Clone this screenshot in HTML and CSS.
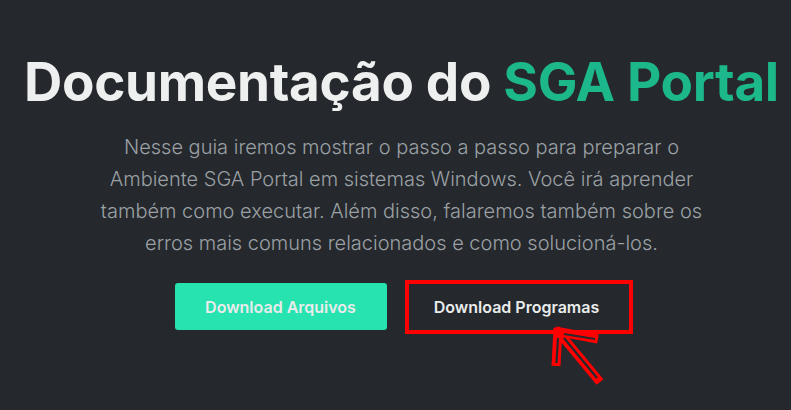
FILE: index.html
```html
<!DOCTYPE html>
<html lang="pt-BR">
<head>
<meta charset="utf-8">
<link rel="stylesheet" href="styles.css">
</head>
<body>
<main class="hero">
  <h1 class="title">Documentação do <span class="accent">SGA Portal</span></h1>
  <p class="lead">Nesse guia iremos mostrar o passo a passo para preparar o Ambiente SGA Portal em sistemas Windows. Você irá aprender também como executar. Além disso, falaremos também sobre os erros mais comuns relacionados e como solucioná-los.</p>
  <div class="actions">
    <a class="btn btn-primary" href="#">Download Arquivos</a>
    <div class="annotated">
      <a class="btn btn-ghost" href="#">Download Programas</a>
      <span class="mark-box"></span>
      <svg class="arrow" width="60" height="64" viewBox="0 0 60 64">
        <g fill="none" stroke-linecap="butt" stroke-linejoin="miter">
          <path d="M8 4 L6 42 M5 7 L48 15 M6 5 L50 58" stroke="#ff0000" stroke-width="9"/>
          <path d="M8 14 L6.5 39 M14 10 L45 15 M14 14 L47 54" stroke="#25282c" stroke-width="2.2"/>
        </g>
      </svg>
    </div>
  </div>
</main>
</body>
</html>
```
FILE: styles.css
```css
html, body {
  margin: 0;
  padding: 0;
  background: #25282c;
  height: 100%;
}
body {
  font-family: Inter, "Noto Sans", sans-serif;
  overflow: hidden;
}
.hero {
  display: flex;
  flex-direction: column;
  align-items: center;
  padding-top: 49px;
}
.title {
  margin: 0 0 0 12px;
  font-size: 53px;
  font-weight: 700;
  line-height: 67px;
  color: #eef0f0;
  letter-spacing: -0.32px;
  white-space: nowrap;
}
.accent {
  color: #1cb88c;
}
.lead {
  margin: 15px 0 0 12px;
  width: 620px;
  text-align: center;
  font-size: 20px;
  line-height: 32px;
  color: #9aa0a5;
  font-weight: 300;
}
.actions {
  display: flex;
  align-items: center;
  gap: 18px;
  margin-top: 24px;
}
.btn {
  display: flex;
  align-items: center;
  justify-content: center;
  box-sizing: border-box;
  width: 212px;
  height: 47px;
  border-radius: 3px;
  font-size: 16px;
  font-weight: 600;
  color: #eaecec;
  text-decoration: none;
}
.btn-primary {
  background: #26e3b0;
}
.annotated {
  position: relative;
  display: flex;
}
.btn-ghost {
  background: transparent;
  padding-left: 12px;
}
.mark-box {
  position: absolute;
  left: 0;
  top: -3px;
  width: 228px;
  height: 54px;
  box-sizing: border-box;
  border: 4px solid #ff0000;
}
.arrow {
  position: absolute;
  left: 145px;
  top: 41px;
}
```
